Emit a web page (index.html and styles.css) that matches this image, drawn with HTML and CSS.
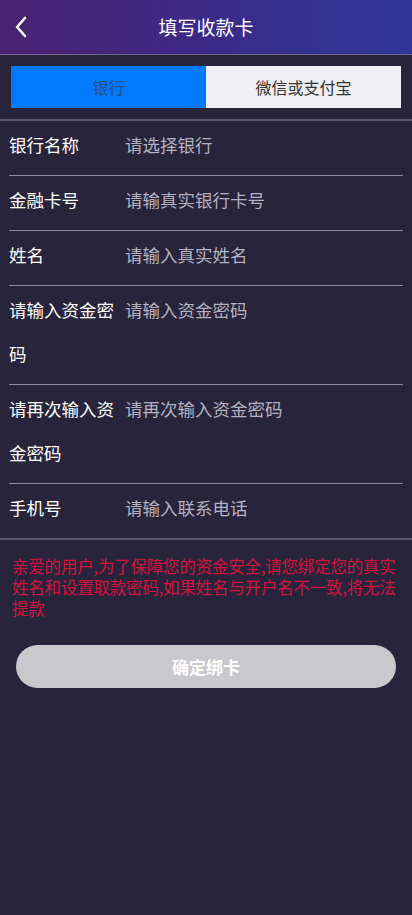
FILE: index.html
```html
<!DOCTYPE html>
<html lang="zh-CN">
<head>
<meta charset="utf-8">
<meta name="viewport" content="width=device-width, initial-scale=1">
<title>填写收款卡</title>
<link rel="stylesheet" href="styles.css">
</head>
<body>
<div class="page">
  <header class="topbar">
    <a class="back" href="#" aria-label="返回">
      <svg width="14" height="22" viewBox="0 0 14 22"><path d="M11 2 L3 11 L11 20" fill="none" stroke="#fff" stroke-width="2.6" stroke-linecap="round" stroke-linejoin="round"/></svg>
    </a>
    <h1 class="title">填写收款卡</h1>
  </header>

  <div class="tabs-wrap">
    <div class="tabs">
      <div class="tab tab-active">银行</div>
      <div class="tab">微信或支付宝</div>
    </div>
  </div>

  <div class="form">
    <div class="row"><div class="label">银行名称</div><div class="value">请选择银行</div></div>
    <div class="row"><div class="label">金融卡号</div><div class="value">请输真实银行卡号</div></div>
    <div class="row"><div class="label">姓名</div><div class="value">请输入真实姓名</div></div>
    <div class="row"><div class="label">请输入资金密码</div><div class="value">请输入资金密码</div></div>
    <div class="row"><div class="label">请再次输入资金密码</div><div class="value">请再次输入资金密码</div></div>
    <div class="row row-last"><div class="label">手机号</div><div class="value">请输入联系电话</div></div>
  </div>

  <p class="notice">亲爱的用户,为了保障您的资金安全,请您绑定您的真实姓名和设置取款密码,如果姓名与开户名不一致,将无法提款</p>

  <div class="btn-wrap">
    <button class="btn" type="button">确定绑卡</button>
  </div>
</div>
</body>
</html>
```

FILE: styles.css
```css
* { box-sizing: border-box; }
html, body {
  margin: 0;
  padding: 0;
  background: #28243b;
  font-family: "Noto Sans CJK SC", "Noto Sans", sans-serif;
}
.page {
  min-height: 915px;
  background: #28243b;
}
.topbar {
  position: relative;
  height: 55px;
  background: linear-gradient(90deg, #4b2171 0%, #3c2a88 50%, #2e3798 100%);
  border-bottom: 1px solid #6d6689;
  display: flex;
  align-items: center;
  justify-content: center;
}
.back {
  position: absolute;
  left: 14px;
  top: 16px;
  display: block;
  width: 14px;
  height: 22px;
}
.back svg { display: block; }
.title {
  margin: 0;
  color: #fff;
  font-size: 19px;
  font-weight: 400;
  line-height: 54px;
}
.tabs-wrap {
  padding: 11px 11px 11px;
  border-bottom: 2px solid #5c5870;
}
.tabs {
  display: flex;
  height: 42px;
}
.tab {
  flex: 1;
  display: flex;
  align-items: center;
  justify-content: center;
  background: #efeff4;
  color: #333;
  font-size: 16px;
}
.tab-active {
  background: #027aff;
  color: #23528a;
}
.form {
  border-bottom: 2px solid #5a566c;
}
.row {
  display: flex;
  margin: 0 9px;
  padding: 2px 0 8px;
  border-bottom: 1px solid #8d8a9e;
  font-size: 17.5px;
  line-height: 44px;
}
.row-last { border-bottom: none; }
.label {
  width: 116px;
  flex: none;
  color: #fff;
}
.value {
  flex: 1;
  color: #b4b2c0;
  white-space: nowrap;
}
.notice {
  margin: 16px 12px 0;
  color: #d5123c;
  font-size: 16.5px;
  line-height: 21px;
  letter-spacing: -0.2px;
}
.btn-wrap {
  padding: 26px 16px 0;
}
.btn {
  display: block;
  width: 100%;
  height: 43px;
  border: none;
  border-radius: 22px;
  background: #c9c8cc;
  color: #fff;
  font-family: inherit;
  font-size: 17px;
  font-weight: 700;
}
```
